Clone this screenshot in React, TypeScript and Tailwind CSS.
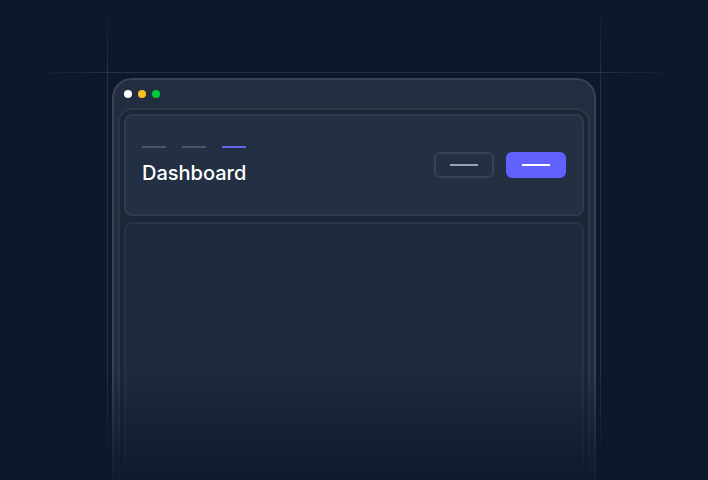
export default function App() {
  return (
    <div className="relative w-[708px] h-[480px] overflow-hidden bg-[#0f172a] font-['Inter',sans-serif]">
      {/* guide lines */}
      <div className="absolute left-[107px] top-0 h-[480px] w-px bg-[linear-gradient(to_bottom,transparent,#263041_15%,#263041_85%,transparent)]" />
      <div className="absolute left-[600px] top-0 h-[480px] w-px bg-[linear-gradient(to_bottom,transparent,#263041_15%,#263041_85%,transparent)]" />
      <div className="absolute left-[30px] top-[72px] h-px w-[650px] bg-[linear-gradient(to_right,transparent,#263041_12%,#263041_88%,transparent)]" />

      {/* window */}
      <div className="relative ml-[112px] mt-[78px] flex h-[430px] w-[484px] flex-col rounded-t-[20px] border-2 border-b-0 border-[#394355] bg-[#222d40]">
        <div className="flex h-[28px] items-center gap-[6px] px-[10px]">
          <span className="h-[8px] w-[8px] rounded-full bg-white" />
          <span className="h-[8px] w-[8px] rounded-full bg-[#fbbf24]" />
          <span className="h-[8px] w-[8px] rounded-full bg-[#00c83c]" />
        </div>

        <div className="mx-[4px] flex flex-1 flex-col gap-[6px] rounded-t-[14px] border-2 border-b-0 border-[#2c3748] bg-[#1c2637] p-[4px] pb-0">
          {/* header card */}
          <div className="flex h-[102px] items-center justify-between rounded-[8px] border-2 border-[#2f3a4c] bg-[#233043] pl-[16px] pr-[16px]">
            <div className="flex flex-col">
              <div className="flex gap-[16px]">
                <span className="h-[2px] w-[24px] bg-[#4b5565]" />
                <span className="h-[2px] w-[24px] bg-[#4b5565]" />
                <span className="h-[2px] w-[24px] bg-[#6366f1]" />
              </div>
              <h1 className="mt-[13px] text-[20px] font-medium leading-[24px] text-white">Dashboard</h1>
            </div>
            <div className="flex gap-[12px] self-start mt-[36px]">
              <button className="flex h-[26px] w-[60px] items-center justify-center rounded-[6px] border-2 border-[#374254]">
                <span className="h-[2px] w-[28px] bg-[#94a3b8]" />
              </button>
              <button className="flex h-[26px] w-[60px] items-center justify-center rounded-[6px] bg-[#6161ff]">
                <span className="h-[2px] w-[28px] bg-white" />
              </button>
            </div>
          </div>

          {/* body card */}
          <div className="flex-1 rounded-t-[8px] border-2 border-b-0 border-[#28334a] bg-[#1f2a3c]" />
        </div>
      </div>

      {/* bottom fade */}
      <div className="pointer-events-none absolute bottom-0 left-0 h-[112px] w-[708px] bg-gradient-to-b from-transparent to-[#0f172a]/90" />
    </div>
  );
}
